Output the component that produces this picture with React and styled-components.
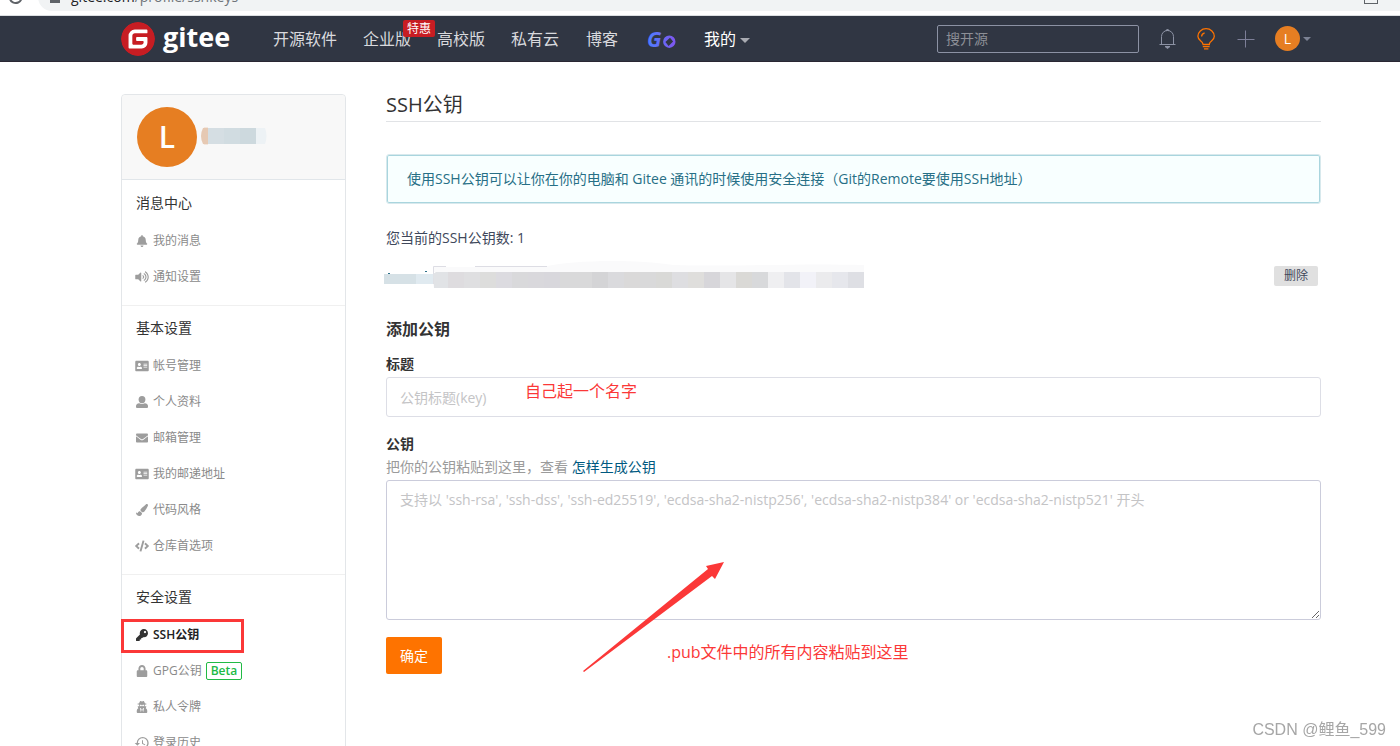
import styled, { createGlobalStyle, css } from "styled-components";
import {
  FaAddressCard,
  FaBell,
  FaCode,
  FaEnvelope,
  FaKey,
  FaLock,
  FaPaintBrush,
  FaUserSecret,
  FaVolumeUp,
} from "react-icons/fa";
import { MdHistory } from "react-icons/md";
import { SiGitee } from "react-icons/si";

const GlobalStyle = createGlobalStyle`
  * {
    box-sizing: border-box;
  }
  body {
    margin: 0;
    overflow: hidden;
    background: #fff;
    color: #40485b;
    font-family: "Open Sans", "Noto Sans CJK SC", sans-serif;
    font-size: 14px;
    line-height: 20px;
  }
  a {
    color: inherit;
    text-decoration: none;
  }
  button, input, textarea {
    font-family: inherit;
  }
`;

const Page = styled.div`
  height: 100vh;
  overflow: hidden;
`;

/* browser bar */

const BrowserBar = styled.div`
  display: flex;
  align-items: flex-end;
  gap: 15px;
  height: 16px;
  padding: 0 0 4px 8px;
  overflow: hidden;
  border-bottom: 1px solid #dcdfe2;
`;

const ReloadIcon = styled.svg`
  flex: none;
  width: 15px;
  height: 22px;
`;

const AddressBar = styled.div`
  display: flex;
  align-items: center;
  flex: 1;
  height: 28px;
  padding: 0 22px 0 12px;
  border-radius: 14px 0 0 14px;
  background: #f1f3f4;
  color: #70757a;
  svg {
    flex: none;
    width: 10px;
    height: 14px;
    margin-right: 11px;
  }
  b {
    color: #202124;
    font-weight: normal;
  }
`;

const ShareIcon = styled.span`
  width: 14px;
  height: 14px;
  margin-left: auto;
  border: 1px solid #5f6368;
`;

/* header */

const Header = styled.header`
  display: flex;
  align-items: center;
  height: 46px;
  padding: 0 89px 0 121px;
  border-bottom: 1px solid #2a2733;
  background: #303643;
`;

const Logo = styled.a`
  display: flex;
  align-items: center;
  gap: 8px;
  width: 139px;
  color: #fff;
  font-size: 27px;
  font-weight: 700;
  line-height: 32px;
  svg {
    flex: none;
    width: 34px;
    height: 34px;
    border-radius: 50%;
    background: radial-gradient(#fff 60%, transparent 61%);
    color: #c71d23;
  }
  span {
    padding-bottom: 4px;
  }
`;

const Nav = styled.nav`
  display: flex;
  align-items: center;
`;

const NavLink = styled.a`
  position: relative;
  display: flex;
  align-items: center;
  gap: 4px;
  padding: 0 ${(props) => (props.$wide ? 14 : 13)}px;
  color: ${(props) => (props.$active ? "#fff" : "#d9dade")};
  font-size: 16px;
  line-height: 24px;
  white-space: nowrap;
`;

const SaleBadge = styled.span`
  position: absolute;
  top: -7px;
  left: 53px;
  padding: 1px 4px 0;
  border-radius: 2px;
  background: #c71d23;
  color: #fff;
  font-size: 12px;
  line-height: 16px;
`;

const Caret = styled.span`
  margin-top: ${(props) => (props.$size > 4 ? 4 : 0)}px;
  border: solid transparent;
  border-width: ${(props) => `${props.$size}px ${props.$size}px 0`};
  border-top-color: ${(props) => props.$color};
`;

const Tools = styled.div`
  display: flex;
  align-items: center;
  gap: 20px;
  margin-left: auto;
`;

const Search = styled.input`
  width: 202px;
  height: 28px;
  padding: 0 8px;
  border: 1px solid #8c92a4;
  border-radius: 2px;
  outline: none;
  background: transparent;
  color: #fff;
  font-size: 14px;
  &::placeholder {
    color: #8c8f96;
  }
`;

const IconButton = styled.button`
  display: flex;
  padding: 0;
  border: 0;
  background: none;
  color: ${(props) => props.$color};
`;

const UserMenu = styled.button`
  display: flex;
  align-items: center;
  gap: 3px;
  padding: 0;
  border: 0;
  background: none;
`;

const Avatar = styled.span`
  display: flex;
  align-items: center;
  justify-content: center;
  flex: none;
  width: ${(props) => props.$size}px;
  height: ${(props) => props.$size}px;
  border-radius: 50%;
  background: #e67e22;
  color: #fff;
  font-size: ${(props) => (props.$size > 30 ? 30 : 14)}px;
  font-weight: ${(props) => (props.$size > 30 ? 600 : 400)};
`;

/* layout */

const Main = styled.main`
  display: flex;
  align-items: flex-start;
  gap: 40px;
  padding: 32px 79px 0 121px;
`;

/* sidebar */

const Sidebar = styled.aside`
  flex: none;
  width: 225px;
  border: 1px solid #e3e6e9;
  border-radius: 4px;
`;

const Profile = styled.div`
  display: flex;
  align-items: center;
  gap: 4px;
  height: 85px;
  padding: 0 15px;
  border-bottom: 1px solid #e1e6ea;
  border-radius: 4px 4px 0 0;
  background: #f8f8f8;
`;

const Group = styled.section`
  padding: 4px 0 10px;
  & + & {
    padding-top: 3px;
    border-top: 1px solid #f0f0f0;
  }
`;

const GroupTitle = styled.h2`
  margin: 0 0 2px;
  padding-left: 14px;
  color: #333;
  font-size: 14px;
  font-weight: normal;
  line-height: 37px;
`;

const Item = styled.a`
  position: relative;
  display: flex;
  align-items: center;
  gap: 4px;
  height: 36px;
  padding-left: 13px;
  color: #8a8a8a;
  font-size: 12px;
  svg {
    flex: none;
    width: 14px;
    height: ${(props) => (props.$large ? 16 : 12)}px;
    color: #9d9d9d;
  }
  ${(props) =>
    props.$large &&
    css`
      padding-left: 12px;
      gap: 3px;
      svg {
        width: 16px;
      }
    `}
  ${(props) =>
    props.$active &&
    css`
      color: #222;
      font-weight: 600;
      svg {
        color: #333;
      }
    `}
`;

const Beta = styled.span`
  padding: 0 4px;
  border: 1px solid #21ba45;
  border-radius: 2px;
  color: #21ba45;
  font-weight: 600;
  line-height: 16px;
`;

const RedFrame = styled.span`
  position: absolute;
  top: 2px;
  left: -1px;
  width: 123px;
  height: 34px;
  border: 3px solid #fb3838;
`;

/* content */

const Content = styled.div`
  position: relative;
  display: flex;
  flex-direction: column;
  flex: 1;
  min-width: 0;
`;

const Title = styled.h1`
  margin: 0;
  padding-bottom: 5px;
  border-bottom: 1px solid #e1e3e6;
  color: #333;
  font-size: 20px;
  font-weight: normal;
  line-height: 22px;
`;

const Notice = styled.p`
  margin: 32px 0 0;
  padding: 14px 20px;
  border: 1px solid #d8e9ed;
  border-radius: 3px;
  background: #f8ffff;
  box-shadow: inset 0 0 0 1px #a9d5de;
  color: #276f86;
`;

const Count = styled.p`
  margin: 24px 0 13px;
`;

const KeyRow = styled.div`
  display: flex;
  align-items: center;
  justify-content: space-between;
  height: 30px;
  padding-right: 3px;
  svg {
    margin-left: -2px;
  }
`;

const DeleteButton = styled.button`
  height: 20px;
  padding: 0 10px;
  border: 0;
  border-radius: 2px;
  background: #e0e0e0;
  color: #40485b;
  font-size: 12px;
  line-height: 20px;
`;

const Form = styled.form`
  display: flex;
  flex-direction: column;
  align-items: flex-start;
  gap: 3px;
  margin-top: 28px;
`;

const FormTitle = styled.h3`
  margin: 0 0 12px;
  color: #333;
  font-size: 16px;
  font-weight: 600;
  line-height: 20px;
`;

const Label = styled.label`
  color: #333;
  font-weight: 600;
`;

const fieldStyle = css`
  display: block;
  width: 100%;
  border-radius: 3px;
  outline: none;
  background: #fff;
  font-size: 14px;
  line-height: 20px;
  &::placeholder {
    color: #c4c4c6;
  }
`;

const TextInput = styled.input`
  ${fieldStyle}
  height: 40px;
  margin-bottom: 14px;
  padding: 0 13px;
  border: 1px solid #dddee6;
`;

const TextArea = styled.textarea`
  ${fieldStyle}
  height: 140px;
  margin-bottom: 14px;
  padding: 9px 13px;
  border: 1px solid #cbccdb;
`;

const Help = styled.p`
  margin: 0;
  color: #9b9b9b;
  a {
    color: #005980;
  }
`;

const SubmitButton = styled.button`
  height: 37px;
  padding: 0 14px 2px;
  border: 0;
  border-radius: 2px;
  background: #fe7300;
  color: #fff;
  font-size: 14px;
`;

/* notes drawn over the page */

const Note = styled.span`
  position: absolute;
  top: ${(props) => props.$top}px;
  left: ${(props) => props.$left}px;
  color: #fb3838;
  font-size: 16px;
  line-height: 20px;
  white-space: nowrap;
`;

const Arrow = styled.svg`
  position: absolute;
  top: 467px;
  left: 197px;
`;

const Watermark = styled.span`
  position: fixed;
  right: 14px;
  bottom: 6px;
  color: #a6a6a6;
  font-family: "Liberation Sans", "Noto Sans CJK SC", sans-serif;
  font-size: 16px;
`;

const GoLogo = () => (
  <svg width="30" height="30" viewBox="0 0 30 30" role="img" aria-label="Go">
    <defs>
      <linearGradient id="go" gradientUnits="userSpaceOnUse" x1="0" y1="0" x2="30" y2="0">
        <stop offset="0" stopColor="#4a80ff" />
        <stop offset="1" stopColor="#8055ee" />
      </linearGradient>
    </defs>
    <text x="1" y="23" fill="url(#go)" fontSize="21" fontStyle="italic" fontWeight="700">
      G
    </text>
    <path
      d="M23.300 11.500a6.200 6.200 0 0 1 0 12.400a6.200 6.200 0 0 1 0-12.400zM24 13.700l-4.600 4.400 3.200 3.800 4.500-4.400z"
      fill="url(#go)"
      fillRule="evenodd"
    />
  </svg>
);

const UserIcon = () => (
  <svg viewBox="0 0 14 12" fill="currentColor">
    <ellipse cx="7" cy="3.6" rx="3.4" ry="3.6" />
    <path d="M4.2 7.2Q7 8.8 9.8 7.2Q13 7.6 13 10.2V11q0 1-1 1H2q-1 0-1-1v-.8Q1 7.6 4.2 7.2z" />
  </svg>
);

const BellIcon = () => (
  <svg width="18" height="22" viewBox="0 0 18 22" fill="none" stroke="currentColor">
    <path d="M.5 16.500h16M2.500 16.500V8.500a6 6 0 0 1 12 0v8" />
    <path d="M7 2.500 8.500 1 10 2.500zM6 18.500h5L8.500 20.500z" fill="currentColor" />
  </svg>
);

const BulbIcon = () => (
  <svg width="20" height="22" viewBox="0 0 20 22" fill="none" stroke="currentColor" strokeWidth="1.300">
    <path d="M5.900 16C5.700 13 .9 12.800.9 8.300a8.200 7.600 0 0 1 16.400 0c0 4.500-4.700 4.700-4.900 7.700" />
    <path d="M4.600 8.500a4.300 4 0 0 1 3-3.700M5.400 16.500h7.600M5.800 18.700h6.800M7 20.900h4.400" />
  </svg>
);

const PlusIcon = () => (
  <svg width="18" height="18" viewBox="0 0 18 18" stroke="currentColor">
    <path d="M.5 9.500h17M8.500.5v17" />
  </svg>
);

const groups = [
  {
    title: "消息中心",
    items: [
      { icon: FaBell, text: "我的消息" },
      { icon: FaVolumeUp, text: "通知设置" },
    ],
  },
  {
    title: "基本设置",
    items: [
      { icon: FaAddressCard, text: "帐号管理" },
      { icon: UserIcon, text: "个人资料" },
      { icon: FaEnvelope, text: "邮箱管理" },
      { icon: FaAddressCard, text: "我的邮递地址" },
      { icon: FaPaintBrush, text: "代码风格" },
      { icon: FaCode, text: "仓库首选项" },
    ],
  },
  {
    title: "安全设置",
    items: [
      { icon: FaKey, text: "SSH公钥", active: true },
      { icon: FaLock, text: "GPG公钥", beta: true },
      { icon: FaUserSecret, text: "私人令牌" },
      { icon: MdHistory, text: "登录历史", large: true },
    ],
  },
];

const mosaic = [
  "#dedcdf", "#dfdfe1", "#dddddc", "#dcdbe0", "#d9d9db", "#d9d8dc", "#d8d7dc",
  "#d9d9da", "#d9d9da", "#d4d4d6", "#dadadd", "#dad9d9", "#d9d9da", "#d9d9d7",
  "#dedee1", "#dfdedc", "#d7d6da", "#e5e5e7", "#dad9d6", "#d8d9db", "#efeff1",
  "#e3e4e9", "#f2f2f8", "#ebebed", "#e6e7ec", "#dedfe4",
];

const HiddenName = () => (
  <svg width="66" height="28" viewBox="0 0 66 28">
    <path d="M3 4h4v18H3q-3-9 0-18z" fill="#f3e6dd" />
    <path d="M2 5h5v16H2q-4-8 0-16z" fill="#e6c9b3" />
    <path d="M7 5h16v16H7z" fill="#d5dee3" />
    <path d="M23 5h16v16H23z" fill="#d1dce1" />
    <path d="M39 5h16v16H39z" fill="#cdd9de" />
    <path d="M55 5h9q3 8 0 16h-9z" fill="#edf2f5" />
  </svg>
);

const HiddenKey = () => (
  <svg width="492" height="30" viewBox="0 0 492 30">
    <path d="M49 11V6h110c30-7 90-8 130-2 60 2 120-2 191 0v7z" fill="#fafafb" />
    <path d="M49.500 23V5.500H62M91 5.500h72" fill="none" stroke="#dddde4" />
    <path d="M0 13h32v10H0z" fill="#d6e1e6" />
    <path d="M32 13h17v10H32z" fill="#e0eaf0" />
    <path d="M49 13l3-2h12v16H50z" fill="#e1e3e6" />
    <path d="M4 12h2v1H4zM41 10h2v1h-2z" fill="#2b6f88" />
    {mosaic.map((color, i) => (
      <rect key={i} x={64 + i * 16} y="11" width="16" height="16" fill={color} />
    ))}
  </svg>
);

export default function App() {
  return (
    <Page>
      <GlobalStyle />
      <BrowserBar>
        <ReloadIcon viewBox="0 0 15 22" fill="none" stroke="#5f6368" strokeWidth="2">
          <path d="M12.500 4.500a6 6 0 1 0 1 5" />
        </ReloadIcon>
        <AddressBar>
          <svg viewBox="0 0 10 14" fill="#5f6368">
            <path d="M0 5h10v8H0z" />
          </svg>
          <b>gitee.com</b>/profile/sshkeys
          <ShareIcon />
        </AddressBar>
      </BrowserBar>

      <Header>
        <Logo href="#">
          <SiGitee />
          <span>gitee</span>
        </Logo>
        <Nav>
          <NavLink href="#">开源软件</NavLink>
          <NavLink href="#">
            企业版<SaleBadge>特惠</SaleBadge>
          </NavLink>
          <NavLink href="#">高校版</NavLink>
          <NavLink href="#">私有云</NavLink>
          <NavLink href="#" $wide>博客</NavLink>
          <NavLink href="#" $wide>
            <GoLogo />
          </NavLink>
          <NavLink href="#" $wide $active>
            我的
            <Caret $size={5} $color="#a9abb2" />
          </NavLink>
        </Nav>
        <Tools>
          <Search type="search" placeholder="搜开源" aria-label="搜开源" />
          <IconButton $color="#8c92a4" aria-label="通知">
            <BellIcon />
          </IconButton>
          <IconButton $color="#fe7300" aria-label="推荐">
            <BulbIcon />
          </IconButton>
          <IconButton $color="#7d7f98" aria-label="新建">
            <PlusIcon />
          </IconButton>
          <UserMenu>
            <Avatar $size={25}>L</Avatar>
            <Caret $size={4} $color="#7c8294" />
          </UserMenu>
        </Tools>
      </Header>

      <Main>
        <Sidebar>
          <Profile>
            <Avatar $size={60}>L</Avatar>
            <HiddenName />
          </Profile>
          {groups.map((group) => (
            <Group key={group.title}>
              <GroupTitle>{group.title}</GroupTitle>
              {group.items.map(({ icon: Icon, text, active, beta, large }) => (
                <Item href="#" key={text} $active={active} $large={large}>
                  <Icon />
                  {text}
                  {beta && <Beta>Beta</Beta>}
                  {active && <RedFrame />}
                </Item>
              ))}
            </Group>
          ))}
        </Sidebar>

        <Content>
          <Title>SSH公钥</Title>
          <Notice>使用SSH公钥可以让你在你的电脑和 Gitee 通讯的时候使用安全连接（Git的Remote要使用SSH地址）</Notice>
          <Count>您当前的SSH公钥数: 1</Count>
          <KeyRow>
            <HiddenKey />
            <DeleteButton>删除</DeleteButton>
          </KeyRow>
          <Form>
            <FormTitle>添加公钥</FormTitle>
            <Label htmlFor="key-title">标题</Label>
            <TextInput id="key-title" placeholder="公钥标题(key)" />
            <Label htmlFor="key-body">公钥</Label>
            <Help>
              把你的公钥粘贴到这里，查看 <a href="#">怎样生成公钥</a>
            </Help>
            <TextArea
              id="key-body"
              placeholder="支持以 'ssh-rsa', 'ssh-dss', 'ssh-ed25519', 'ecdsa-sha2-nistp256', 'ecdsa-sha2-nistp384' or 'ecdsa-sha2-nistp521' 开头"
            />
            <SubmitButton type="button">确定</SubmitButton>
          </Form>
          <Note $top={287} $left={139}>自己起一个名字</Note>
          <Note $top={548} $left={281}>.pub文件中的所有内容粘贴到这里</Note>
          <Arrow width="142" height="112" viewBox="0 0 142 112" fill="#fb3838">
            <path d="M0 110 125 8l-2-3 18-4-9 17-3-3L1 111z" />
          </Arrow>
        </Content>
      </Main>
      <Watermark>CSDN @鲤鱼_599</Watermark>
    </Page>
  );
}
